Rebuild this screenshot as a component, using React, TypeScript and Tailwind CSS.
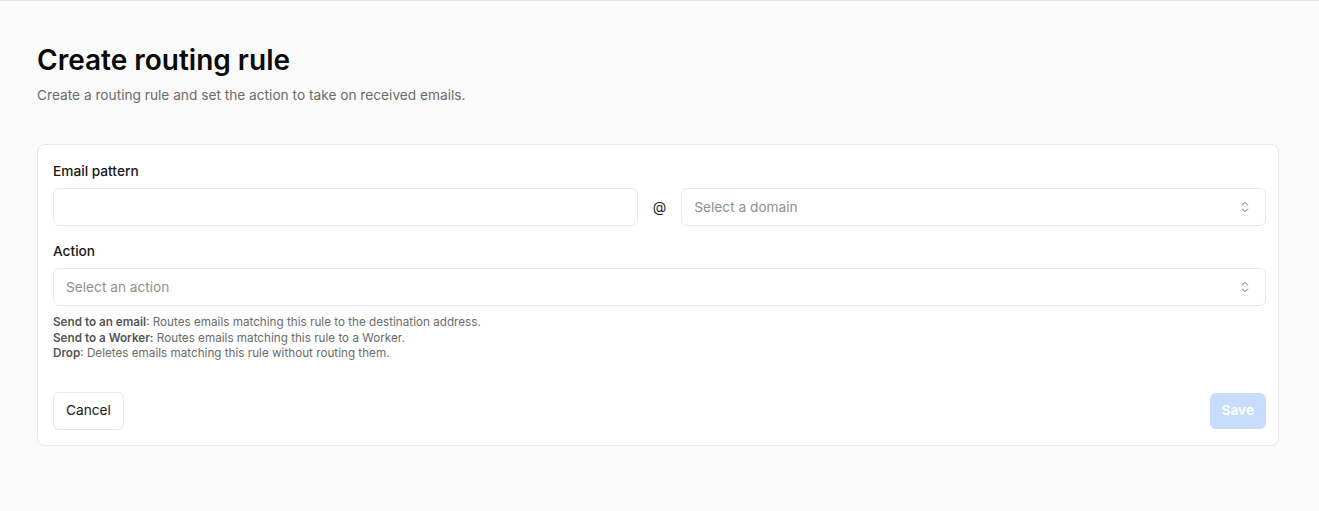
import React from "react";

function Chevrons() {
  return (
    <svg width="16" height="16" viewBox="0 0 24 24" fill="none" stroke="#6b7280" strokeWidth="1.5" strokeLinecap="round" strokeLinejoin="round">
      <path d="m8 15 4 4 4-4" />
      <path d="m8 9 4-4 4 4" />
    </svg>
  );
}

export default function App() {
  return (
    <div className="min-h-[511px] bg-[#fafafa] border-t border-[#e5e5e5] pl-[37px] pr-[40px] pt-[41px] text-[#171717]" style={{ fontFamily: "Inter, 'Noto Sans', sans-serif" }}>
      <h1 className="text-[28px] leading-[36px] font-semibold text-[#0a0a0a]">Create routing rule</h1>
      <p className="mt-[7px] text-[13.7px] leading-5 text-[#6b6b6b]">Create a routing rule and set the action to take on received emails.</p>
      <div className="mt-[39px] bg-white border border-[#e8e8e8] rounded-lg pl-[15px] pr-[12px] pt-[16px] pb-[15px]">
        <label className="block text-[13.7px] leading-5 font-medium text-[#171717]">Email pattern</label>
        <div className="mt-[7px] grid grid-cols-[1fr_auto_1fr] items-center gap-x-[15px]">
          <div className="h-[38px] rounded-md border border-[#e8e8e8] bg-white"></div>
          <span className="text-sm text-[#262626]">@</span>
          <div className="h-[38px] rounded-md border border-[#e8e8e8] bg-white flex items-center justify-between pl-[12px] pr-[12px]">
            <span className="text-[13.7px] text-[#8f8f8f]">Select a domain</span>
            <Chevrons />
          </div>
        </div>
        <label className="mt-[15px] block text-[13.7px] leading-5 font-medium text-[#171717]">Action</label>
        <div className="mt-[7px] h-[38px] rounded-md border border-[#e8e8e8] bg-white flex items-center justify-between pl-[12px] pr-[12px]">
          <span className="text-[13.7px] text-[#8f8f8f]">Select an action</span>
          <Chevrons />
        </div>
        <div className="mt-[9px] text-[11.7px] leading-[15.5px] text-[#6b6b6b]">
          <p><span className="font-semibold text-[#555]">Send to an email</span>: Routes emails matching this rule to the destination address.</p>
          <p><span className="font-semibold text-[#555]">Send to a Worker:</span> Routes emails matching this rule to a Worker.</p>
          <p><span className="font-semibold text-[#555]">Drop</span>: Deletes emails matching this rule without routing them.</p>
        </div>
        <div className="mt-[30px] flex items-center justify-between">
          <button className="h-[38px] px-[12px] rounded-md border border-[#e8e8e8] bg-white text-[13.7px] text-[#171717]">Cancel</button>
          <button className="h-[36px] px-[12px] rounded-md bg-[#c8dcfd] text-[13.7px] font-semibold text-white">Save</button>
        </div>
      </div>
    </div>
  );
}
